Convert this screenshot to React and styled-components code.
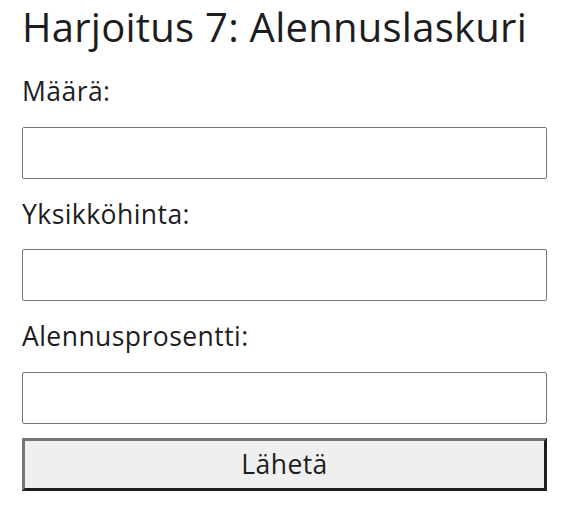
import React from "react";
import styled, { createGlobalStyle } from "styled-components";

const Global = createGlobalStyle`
  html, body { margin: 0; padding: 0; background: #ffffff; }
  body { font-family: "Open Sans", "Noto Sans", "DejaVu Sans", sans-serif; color: #1d1d1f; }
`;

const Page = styled.main`
  padding: 0 20px 0 22px;
  width: 525px;
`;

const Title = styled.h1`
  margin: 0;
  font-size: 40px;
  line-height: 54px;
  font-weight: 400;
  letter-spacing: 0.25px;
  white-space: nowrap;
`;

const Form = styled.form`
  display: flex;
  flex-direction: column;
  margin-top: 2px;
`;

const Label = styled.label`
  display: block;
  font-size: 26.5px;
  line-height: 32px;
  letter-spacing: 0.45px;
  margin: 19px 0 19.5px;
`;

const Input = styled.input`
  box-sizing: border-box;
  width: 525px;
  height: 52px;
  border: 1px solid #767676;
  border-radius: 2px;
  background: #fff;
  font-size: 24px;
  font-family: inherit;
  padding: 0 8px;
`;

const Submit = styled.button`
  box-sizing: border-box;
  width: 525px;
  height: 53px;
  margin-top: 14px;
  border-width: 3px;
  border-style: solid;
  border-color: #767676 #1f1f1f #1f1f1f #767676;
  background: #efefef;
  font-family: inherit;
  font-size: 26.5px;
  letter-spacing: 0.45px;
  color: #1d1d1f;
  padding: 0;
`;

export default function App() {
  return (
    <>
      <Global />
      <Page>
        <Title>Harjoitus 7: Alennuslaskuri</Title>
        <Form onSubmit={(e) => e.preventDefault()}>
          <Label htmlFor="maara">Määrä:</Label>
          <Input id="maara" type="text" />
          <Label htmlFor="hinta">Yksikköhinta:</Label>
          <Input id="hinta" type="text" />
          <Label htmlFor="ale">Alennusprosentti:</Label>
          <Input id="ale" type="text" />
          <Submit type="submit">Lähetä</Submit>
        </Form>
      </Page>
    </>
  );
}
